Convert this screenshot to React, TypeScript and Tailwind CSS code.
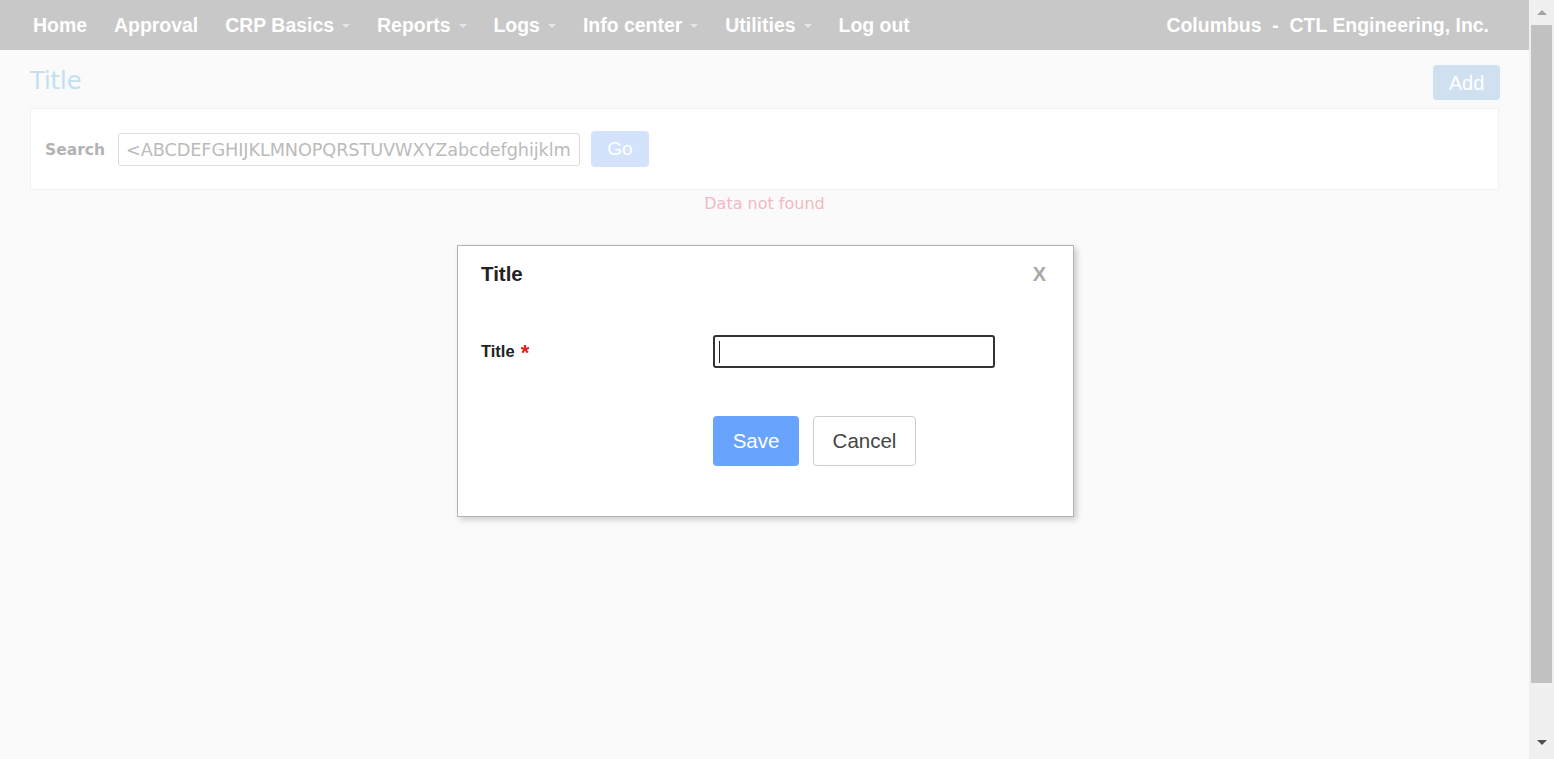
import React from "react"

const navItems = [
    { label: "Home", caret: false },
    { label: "Approval", caret: false },
    { label: "CRP Basics", caret: true },
    { label: "Reports", caret: true },
    { label: "Logs", caret: true },
    { label: "Info center", caret: true },
    { label: "Utilities", caret: true },
    { label: "Log out", caret: false },
]

const Caret = () => (
    <span className="ml-[8px] inline-block h-0 w-0 border-x-[4px] border-t-[4px] border-x-transparent border-t-[#e6e6e6] align-middle" />
)

const NavBar = () => (
    <div className="flex h-[50px] items-center justify-between bg-[#c8c8c8] pl-[33px] pr-[40px] pt-[2px] font-['Liberation_Sans',Arial,sans-serif] text-[19.45px] font-bold text-white">
        <div className="flex items-center gap-[27px]">
            {navItems.map((item) => (
                <span key={item.label} className="flex items-center">
                    {item.label}
                    {item.caret && <Caret />}
                </span>
            ))}
        </div>
        <span className="whitespace-pre">Columbus  -  CTL Engineering, Inc.</span>
    </div>
)

const Modal = () => (
    <div className="absolute inset-0 flex justify-center pl-[2px] pt-[245px]">
        <div className="h-[272px] w-[617px] border border-[#b3b3b3] bg-white px-[23px] pt-[16px] font-['Liberation_Sans',Arial,sans-serif] shadow-[3px_3px_6px_rgba(0,0,0,0.18)]">
            <div className="flex items-center justify-between leading-[24px]">
                <span className="text-[20.5px] font-bold text-[#222]">Title</span>
                <span className="mr-[4px] text-[20px] font-bold text-[#a9a9a9]">X</span>
            </div>
            <div className="mt-[49px] flex items-center">
                <label className="flex w-[232px] items-center text-[16.5px] font-bold text-[#222]">
                    Title
                    <span className="ml-[6px] mt-[2px] text-[22px] leading-none text-[#e02020]">*</span>
                </label>
                <div className="relative h-[33px] w-[282px] rounded-[3px] border-2 border-[#333] bg-white">
                    <span className="absolute left-[4px] top-[4px] h-[22px] w-px bg-[#222]" />
                </div>
            </div>
            <div className="mt-[48px] flex gap-[14px] pl-[232px]">
                <button className="h-[50px] w-[86px] rounded-[4px] bg-[#68a3fd] text-[20.5px] text-white">Save</button>
                <button className="h-[50px] w-[103px] rounded-[4px] border border-[#cccccc] bg-white text-[20.5px] text-[#444]">Cancel</button>
            </div>
        </div>
    </div>
)

const ScrollBar = () => (
    <div className="flex h-full w-[25px] flex-col items-center bg-[#f0f0f0]">
        <span className="mt-[10px] h-0 w-0 border-x-[5px] border-b-[5px] border-x-transparent border-b-[#a3a3a3]" />
        <div className="mt-[10px] h-[658px] w-[21px] bg-[#c1c1c1]" />
        <span className="mt-[57px] h-0 w-0 border-x-[5px] border-t-[5px] border-x-transparent border-t-[#505050]" />
    </div>
)

export default function App() {
    return (
        <div className="flex h-[759px] w-full overflow-hidden bg-[#fafafa]">
            <div className="relative flex-1">
                <NavBar />
                <div className="px-[30px] font-['DejaVu_Sans',sans-serif]">
                    <div className="flex items-center justify-between pt-[15px]">
                        <h1 className="-mt-[4px] text-[24px] leading-[30px] text-[#c2e0f0]">Title</h1>
                        <button className="mr-[-1px] h-[35px] w-[67px] rounded-[4px] bg-[#cfe0f1] font-['Liberation_Sans',Arial,sans-serif] text-[20px] text-white">Add</button>
                    </div>
                    <div className="mt-[8px] flex h-[82px] items-center border border-[#f2f2f2] bg-white pl-[14px]">
                        <span className="mt-[3px] text-[15.5px] font-bold text-[#b3b3b3]">Search</span>
                        <div className="ml-[13px] flex h-[33px] w-[462px] items-center overflow-hidden whitespace-nowrap rounded-[3px] border border-[#dcdcdc] pl-[7px] pt-[2px] text-[17.7px] tracking-[-0.1px] text-[#bbbbbb]">
                            &lt;ABCDEFGHIJKLMNOPQRSTUVWXYZabcdefghijklm
                        </div>
                        <button className="ml-[11px] h-[36px] w-[58px] rounded-[4px] bg-[#d3e3fc] font-['Liberation_Sans',Arial,sans-serif] text-[19px] text-white">Go</button>
                    </div>
                    <p className="mt-[2px] text-center text-[16px] leading-[24px] text-[#f2b9c3]">Data not found</p>
                </div>
                <Modal />
            </div>
            <ScrollBar />
        </div>
    )
}
